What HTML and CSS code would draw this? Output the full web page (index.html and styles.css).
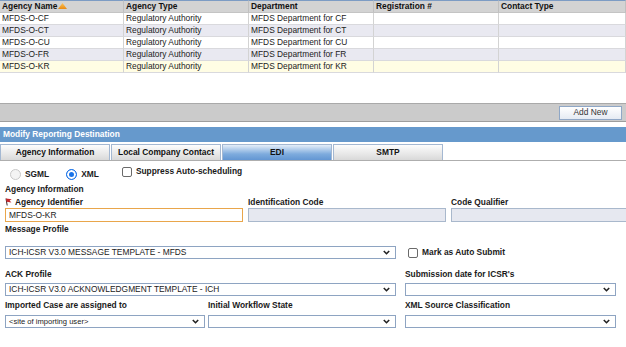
FILE: index.html
```html
<!doctype html><html lang="en"><head>
<meta charset="utf-8" />
<title>Reporting Destinations</title>
<link rel="stylesheet" href="styles.css"></head><body>
<table class="grid">
	<tr><th class="c1">Agency Name<svg class="sort" width="9" height="6" viewBox="0 0 9 6"><defs><linearGradient id="og" x1="0" y1="0" x2="0" y2="1"><stop offset="0" stop-color="#fbc45a"/><stop offset="1" stop-color="#e98a12"/></linearGradient></defs><polygon points="0,6 4.5,0 9,6" fill="url(#og)"/></svg></th><th class="c2">Agency Type</th><th class="c3">Department</th><th class="c4">Registration #</th><th>Contact Type</th></tr>
	<tr><td>MFDS-O-CF</td><td>Regulatory Authority</td><td>MFDS Department for CF</td><td></td><td></td></tr>
	<tr class="alt"><td>MFDS-O-CT</td><td>Regulatory Authority</td><td>MFDS Department for CT</td><td></td><td></td></tr>
	<tr><td>MFDS-O-CU</td><td>Regulatory Authority</td><td>MFDS Department for CU</td><td></td><td></td></tr>
	<tr class="alt"><td>MFDS-O-FR</td><td>Regulatory Authority</td><td>MFDS Department for FR</td><td></td><td></td></tr>
	<tr class="sel-row"><td>MFDS-O-KR</td><td>Regulatory Authority</td><td>MFDS Department for KR</td><td></td><td></td></tr>
</table>
<div class="bar"><button>Add New</button></div>
<div class="cap">Modify Reporting Destination</div>
<div class="tabs">
	<a class="tab">Agency Information</a>
	<a class="tab">Local Company Contact</a>
	<a class="tab on">EDI</a>
	<a class="tab">SMTP</a>
</div>
<div class="form">
	<div class="opts">
		<label class="opt first"><input type="radio" name="fmt" disabled /> SGML</label>
		<label class="opt"><input type="radio" name="fmt" checked /> XML</label>
		<label class="opt chk"><input type="checkbox" /> Suppress Auto-scheduling</label>
	</div>
	<div class="lbl sec">Agency Information</div>
	<div class="row r1">
		<div class="fld w1"><div class="lbl"><svg class="flag" width="7" height="8" viewBox="0 0 7 8"><path d="M1 0.5 L2.2 7.5" stroke="#3a2a2a" stroke-width="1"/><path d="M1 0.6 L6.8 1.2 L4.6 2.6 L6.4 4.4 L1.5 3.8 Z" fill="#c4262c"/></svg> Agency Identifier</div><div class="inp hl">MFDS-O-KR</div></div>
		<div class="fld w2"><div class="lbl">Identification Code</div><div class="inp ro"></div></div>
		<div class="fld w3"><div class="lbl">Code Qualifier</div><div class="inp ro"></div></div>
	</div>
	<div class="lbl mp">Message Profile</div>
	<div class="row r2">
		<div class="sel wide"><span>ICH-ICSR V3.0 MESSAGE TEMPLATE - MFDS</span><svg width="7" height="5" viewBox="0 0 7 5"><path d="M0.8 1 L3.5 3.7 L6.2 1" fill="none" stroke="#222" stroke-width="1.6"/></svg></div>
		<label class="opt chk auto"><input type="checkbox" /> Mark as Auto Submit</label>
	</div>
	<div class="row r3">
		<div class="fld wide"><div class="lbl">ACK Profile</div><div class="sel"><span>ICH-ICSR V3.0 ACKNOWLEDGMENT TEMPLATE - ICH</span><svg width="7" height="5" viewBox="0 0 7 5"><path d="M0.8 1 L3.5 3.7 L6.2 1" fill="none" stroke="#222" stroke-width="1.6"/></svg></div></div>
		<div class="fld right"><div class="lbl">Submission date for ICSR's</div><div class="sel"><span></span><svg width="7" height="5" viewBox="0 0 7 5"><path d="M0.8 1 L3.5 3.7 L6.2 1" fill="none" stroke="#222" stroke-width="1.6"/></svg></div></div>
	</div>
	<div class="row r4">
		<div class="fld n1"><div class="lbl">Imported Case are assigned to</div><div class="sel"><span class="sm">&lt;site of importing user&gt;</span><svg width="7" height="5" viewBox="0 0 7 5"><path d="M0.8 1 L3.5 3.7 L6.2 1" fill="none" stroke="#222" stroke-width="1.6"/></svg></div></div>
		<div class="fld n2"><div class="lbl">Initial Workflow State</div><div class="sel"><span></span><svg width="7" height="5" viewBox="0 0 7 5"><path d="M0.8 1 L3.5 3.7 L6.2 1" fill="none" stroke="#222" stroke-width="1.6"/></svg></div></div>
		<div class="fld right"><div class="lbl">XML Source Classification</div><div class="sel"><span></span><svg width="7" height="5" viewBox="0 0 7 5"><path d="M0.8 1 L3.5 3.7 L6.2 1" fill="none" stroke="#222" stroke-width="1.6"/></svg></div></div>
	</div>
</div>
</body></html>
```

FILE: styles.css
```css
html{ overflow: hidden }
body{ margin: 0; font: 8.4px/11px "Liberation Sans", Arial, sans-serif; color: #222; background: #fff }

/* list of destinations */
.grid{ width: 100%; border-collapse: separate; border-spacing: 0; table-layout: fixed }
.grid tr{ height: 12px }
.grid th, .grid td{ padding: 0 2px; text-align: left; white-space: nowrap; overflow: hidden; border-right: 1px solid #d3d3d3; border-bottom: 1px solid #d9d9dd; line-height: 11px }
.grid th{ background: #d3d3d3; border-top: 1px solid #7d9cc4; border-bottom-color: #c4c4c4; border-right-color: #c0c0c0; font-weight: bold; color: #111 }
.grid .c1{ width: 119px }
.grid .c2, .grid .c3, .grid .c4{ width: 120px }
.grid .alt td{ background: #e9e9f1 }
.grid .sel-row td{ background: #fffde4 }
.sort{ margin-left: 1px; vertical-align: 0 }

/* toolbar */
.bar{ margin-top: 30px; height: 17px; background: #cbcbcb; border-top: 1px solid #a9a9a9; border-bottom: 1px solid #9d9d9d; display: flex; justify-content: flex-end; align-items: center; padding-right: 4px }
.bar button{ height: 14px; width: 63px; padding: 0; font: inherit; color: #333; border: 1px solid #8fa7c6; background: linear-gradient(#fff, #e5ebf3) }

.cap{ margin-top: 5px; height: 15px; line-height: 15px; padding-left: 3px; background: #6699cc; color: #fff; font-weight: bold }

/* tabs */
.tabs{ display: flex; gap: 1px; margin-top: 2px; border-bottom: 1px solid #aeaeae }
.tab{ width: 108px; height: 15px; line-height: 15px; text-align: center; font-weight: bold; color: #111; border: 1px solid #a4b8d2; border-bottom: none; background: linear-gradient(#fdfdfd, #d9d9d9) }
.tab.on{ background: linear-gradient(#e4eef9, #7eabdd 60%, #6396d3) }

/* EDI form */
.form{ padding: 0 5px }
.lbl{ font-weight: bold; color: #1a1a1a; line-height: 11px; white-space: nowrap }
.opts{ display: flex; align-items: center; height: 14px; margin-top: 6px }
.opt{ display: flex; align-items: center; font-weight: bold; color: #1a1a1a; margin-right: 17px }
.opt.first{ margin-left: 5px }
.opt input{ appearance: none; margin: 0 4px 0 0; width: 11px; height: 11px; border-radius: 50%; border: 1px solid #c9c9c9; background: #f4f4f4 }
.opt input:checked{ border-color: #1a73e8; background: #1a73e8; box-shadow: inset 0 0 0 2px #fff }
.opt.chk input{ width: 10px; height: 10px; border-radius: 2px; border: 1px solid #6a6a6a; background: #fff; margin-right: 4px }
.opts .chk{ align-self: flex-start; margin-top: -1px; margin-left: 6px }
.sec{ margin-top: 3px }
.row{ display: flex }
.row > *{ flex: none }
.fld{ display: flex; flex-direction: column }
.r1{ margin-top: 2px; gap: 5px }
.w1{ width: 238px }
.w2{ width: 198px }
.w3{ width: 200px }
.flag{ vertical-align: -1px; margin-right: 1px }
.inp{ height: 14px; box-sizing: border-box; padding: 0 3px; line-height: 12px; border: 1px solid #a9b8cc; background: #fff }
.inp.hl{ border-color: #e9a64b }
.inp.ro{ background: #e6e8f0 }
.mp{ margin-top: 2px }
.sel{ display: flex; align-items: center; justify-content: space-between; height: 13px; box-sizing: border-box; padding: 0 5px 0 3px; border: 1px solid #8ea4c2; background: #fff }
.sel span{ white-space: nowrap }
.sel .sm{ font-size: 7.6px }
.wide{ width: 391px }
.r2{ margin-top: 11px; align-items: center }
.auto{ margin-left: 12px }
.r3{ margin-top: 10px }
.r3 .fld, .r4 .fld{ gap: 3px }
.right{ width: 211px; margin-left: 9px }
.r4{ margin-top: 4px }
.r4 .fld{ gap: 4px }
.n1{ width: 200px }
.n2{ width: 188px; margin-left: 3px }
```
